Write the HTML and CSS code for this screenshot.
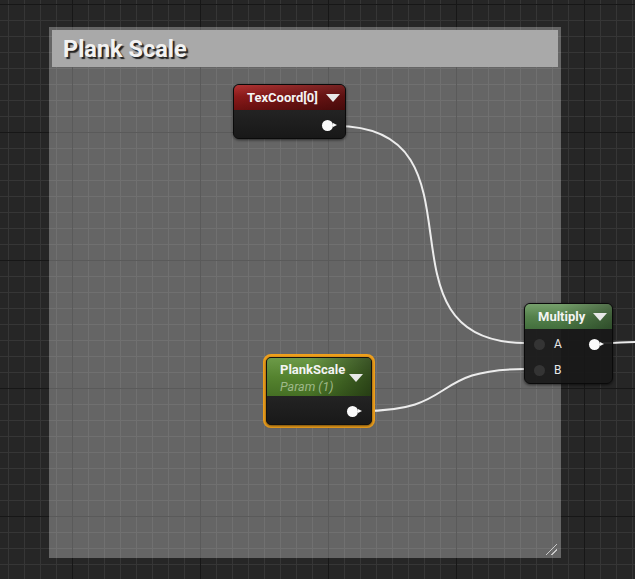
FILE: index.html
```html
<!DOCTYPE html>
<html lang="en">
<head>
    <meta charset="UTF-8">
    <title>Material Graph</title>
    <link rel="stylesheet" href="styles.css">
</head>
<body>
    <div class="graph">
        <div class="comment">
            <div class="commentTitle">Plank Scale</div>
            <div class="grip"></div>
        </div>

        <svg class="wires" width="635" height="579" viewBox="0 0 635 579">
            <path d="M336 126 C496 126 365 343 525 343" />
            <path d="M362 411 C460 411 427 369 525 369" />
            <path d="M603 343 C620 343 620 342 635 342" />
        </svg>

        <div class="node texcoord">
            <div class="nodeHead red">
                <span class="nodeTitle">TexCoord[0]</span>
                <span class="arrow"></span>
            </div>
            <div class="nodeBody">
                <div class="pinRow out"><span class="pin on"></span></div>
            </div>
        </div>

        <div class="selected plank">
            <div class="node">
                <div class="nodeHead green tall">
                    <div>
                        <div class="nodeTitle">PlankScale</div>
                        <div class="nodeSub">Param (1)</div>
                    </div>
                    <span class="arrow"></span>
                </div>
                <div class="nodeBody">
                    <div class="pinRow out"><span class="pin on"></span></div>
                </div>
            </div>
        </div>

        <div class="node multiply">
            <div class="nodeHead mgreen">
                <span class="nodeTitle">Multiply</span>
                <span class="arrow"></span>
            </div>
            <div class="nodeBody pins">
                <div class="pinRow">
                    <span class="pin off"></span><span class="pinName">A</span>
                    <span class="pin on right"></span>
                </div>
                <div class="pinRow">
                    <span class="pin off"></span><span class="pinName">B</span>
                </div>
            </div>
        </div>
    </div>
</body>
</html>
```

FILE: styles.css
```css
*{padding:0;margin:0;box-sizing:border-box;}
body{width:635px;height:579px;overflow:hidden;background:#262626;font-family:Roboto,"Liberation Sans",sans-serif;}
.graph{position:relative;width:635px;height:579px;
background-image:
linear-gradient(to right,#171717 1px,transparent 1px),
linear-gradient(to bottom,#171717 1px,transparent 1px),
linear-gradient(to right,#363636 1px,transparent 1px),
linear-gradient(to bottom,#363636 1px,transparent 1px);
background-size:128px 128px,128px 128px,16px 16px,16px 16px;
background-position:72px 4px,72px 4px,8px 4px,8px 4px;}

.comment{position:absolute;left:49px;top:27px;width:512px;height:531px;background:rgba(255,255,255,0.29);padding:3px;}
.commentTitle{height:37px;background:#a9a9a9;color:#f2f2f2;font-weight:bold;font-size:23.5px;line-height:38px;padding-left:11px;
text-shadow:2px 2px 1px #222;}
.grip{position:absolute;right:4px;bottom:3px;width:13px;height:13px;
background:repeating-linear-gradient(135deg,transparent 0 2px,#c8c8c8 2px 3px,transparent 3px 4px);
clip-path:polygon(100% 0,100% 100%,0 100%);}

.wires{position:absolute;left:0;top:0;}
.wires path{fill:none;stroke:#ececec;stroke-width:2;}

.node{position:absolute;border:1px solid #0a0a0a;border-radius:6px;overflow:hidden;background:#1c1c1c;
box-shadow:0 1px 3px rgba(0,0,0,0.6);}
.nodeHead{display:flex;justify-content:space-between;align-items:center;padding:0 5px 0 13px;height:25px;}
.nodeTitle{color:#f4f4f4;font-size:13px;font-weight:bold;}
.nodeSub{color:#9fb889;font-size:12.5px;font-style:italic;margin-top:2px;}
.arrow{width:0;height:0;border-left:7px solid transparent;border-right:7px solid transparent;border-top:8px solid #e8e8e8;}
.red{background:linear-gradient(to right,rgba(0,0,0,0) 0,rgba(0,0,0,0.35) 100%),linear-gradient(to bottom,#b23333 0,#8c1a1a 45%,#6c1010 100%);}
.green{background:linear-gradient(to right,rgba(0,0,0,0) 40%,rgba(0,0,0,0.45) 100%),linear-gradient(to bottom,#6c9a48 0,#55832f 50%,#456f24 100%);}
.mgreen{background:linear-gradient(to right,rgba(0,0,0,0) 40%,rgba(0,0,0,0.3) 100%),linear-gradient(to bottom,#76a06c 0,#55824c 50%,#436f3d 100%);}
.tall{height:38px;padding-left:13px;align-items:flex-start;padding-top:4px;}
.tall .arrow{margin-top:12px;margin-right:3px;}
.nodeBody{background:linear-gradient(to bottom,#232323,#181818);}

.pinRow{display:flex;align-items:center;height:26px;}
.pinRow.out{justify-content:flex-end;padding-right:7px;}
.pin{position:relative;width:11px;height:11px;border-radius:50%;}
.pin.on{background:#fafafa;}
.pin.on::after{content:"";position:absolute;right:-4px;top:3px;border-top:2.5px solid transparent;border-bottom:2.5px solid transparent;border-left:4px solid #fafafa;}
.pin.off{background:#343434;}
.pinName{color:#e8e8e8;font-size:12px;margin-left:9px;}
.pin.right{margin-left:auto;margin-right:12px;}

.texcoord{left:233px;top:84px;width:113px;height:55px;}
.texcoord .nodeBody{height:28px;}
.texcoord .pinRow{height:28px;padding-right:12px;padding-top:3px;}

.selected{position:absolute;left:263px;top:354px;width:112px;height:74px;border:3px solid #f0a11c;border-radius:8px;background:#b06f10;}
.selected .node{position:static;border-radius:5px;height:100%;border:1px solid #111;}
.plank .nodeBody{height:30px;}
.plank .pinRow{height:30px;padding-right:13px;}

.multiply{left:524px;top:303px;width:89px;height:81px;background:rgba(24,24,24,0.92);}
.multiply .nodeHead{height:25px;padding-left:13px;}
.multiply .nodeBody{background:transparent;padding-top:2px;}
.multiply .pinRow{padding-left:9px;height:26px;}
```
